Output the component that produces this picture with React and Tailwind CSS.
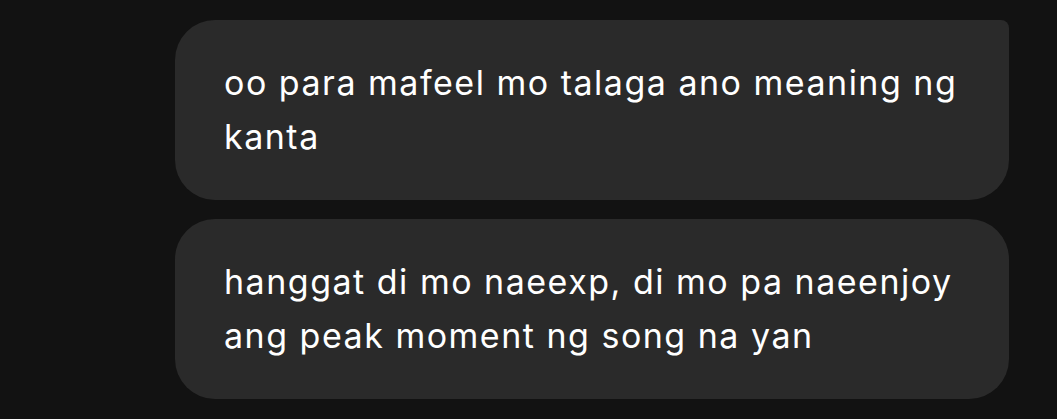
import React from 'react';

const messages = [
  { lines: ['oo para mafeel mo talaga ano meaning ng', 'kanta'], corner: 'rounded-tr-[8px]' },
  { lines: ['hanggat di mo naeexp, di mo pa naeenjoy', 'ang peak moment ng song na yan'], corner: '' },
];

const Bubble = ({ lines, corner }) => (
  <div className={`w-[834px] h-[180px] bg-[#2a2a2a] rounded-[40px] ${corner} px-[49px] flex flex-col justify-center`}>
    {lines.map((l, i) => (
      <div key={i} className="text-white text-[34px] leading-[54px] tracking-[1.5px] whitespace-nowrap">
        {l}
      </div>
    ))}
  </div>
);

export default function App() {
  return (
    <div
      className="w-[1057px] h-[419px] bg-[#121212] flex flex-col items-end pr-[48px] pt-[20px] gap-[19px] overflow-hidden"
      style={{ fontFamily: 'Inter, "Noto Sans", sans-serif' }}
    >
      {messages.map((m, i) => (
        <Bubble key={i} {...m} />
      ))}
    </div>
  );
}
